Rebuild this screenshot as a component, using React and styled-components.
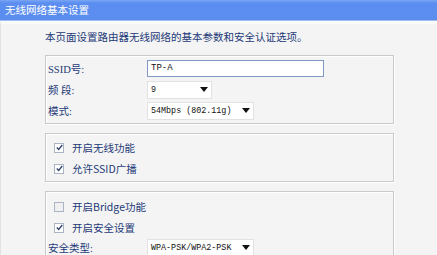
import React from "react";
import styled, { createGlobalStyle } from "styled-components";

const GlobalStyle = createGlobalStyle`
  html, body {
    margin: 0;
    padding: 0;
    background: #f4f4f4;
  }
  body {
    font-family: "Liberation Serif", "Noto Sans CJK SC", serif;
    font-size: 10.5px;
  }
`;

const CheckIcon = () => (
  <svg width="7" height="7" viewBox="0 0 7 7">
    <path d="M0.8 3.4 L2.7 5.4 L6.2 1" fill="none" stroke="#32466e" strokeWidth="1.4" />
  </svg>
);

const Caret = () => (
  <svg width="8" height="5" viewBox="0 0 8 5">
    <path d="M0 0 H8 L4 5 Z" fill="#111" />
  </svg>
);

const App = () => {
  return (
    <>
      <GlobalStyle />
      <Page>
        <Header>无线网络基本设置</Header>
        <Body>
          <Intro>本页面设置路由器无线网络的基本参数和安全认证选项。</Intro>
          <Box $pad="2px 0">
            <Row>
              <Label>SSID号:</Label>
              <TextInput>TP-A</TextInput>
            </Row>
            <Row>
              <Label>频 段:</Label>
              <Select $w={65}>
                <span>9</span>
                <Caret />
              </Select>
            </Row>
            <Row>
              <Label>模式:</Label>
              <Select $w={107}>
                <span>54Mbps (802.11g)</span>
                <Caret />
              </Select>
            </Row>
          </Box>
          <Box $pad="3px 0 2px">
            <CheckRow>
              <Check $on>
                <CheckIcon />
              </Check>
              <span>开启无线功能</span>
            </CheckRow>
            <CheckRow>
              <Check $on>
                <CheckIcon />
              </Check>
              <span>允许SSID广播</span>
            </CheckRow>
          </Box>
          <Box $pad="4px 0 2px">
            <CheckRow>
              <Check />
              <span>开启Bridge功能</span>
            </CheckRow>
            <CheckRow>
              <Check $on>
                <CheckIcon />
              </Check>
              <span>开启安全设置</span>
            </CheckRow>
            <Row $h={19}>
              <Label>安全类型:</Label>
              <Select $w={107}>
                <span>WPA-PSK/WPA2-PSK</span>
                <Caret />
              </Select>
            </Row>
          </Box>
        </Body>
      </Page>
    </>
  );
};

export default App;

const Page = styled.div`
  width: 437px;
  height: 255px;
  overflow: hidden;
  background: #f4f4f4;
`;

const Header = styled.div`
  height: 20px;
  line-height: 20px;
  padding-left: 5px;
  color: #fff;
  font-family: "Noto Sans CJK SC", sans-serif;
  font-size: 10.5px;
  background: linear-gradient(to bottom, #7aa6f4 0, #5b8ef0 3px, #5a8dee 100%);
  border-bottom: 1px solid #9fbdf0;
`;

const Body = styled.div`
  display: flex;
  flex-direction: column;
  padding: 6px 0 0 44px;
  border-left: 1px solid #e2e2e2;
  border-top: 3px solid #fafafa;
  min-height: 230px;
`;

const Intro = styled.div`
  color: #1d3a78;
  font-family: "Noto Sans CJK SC", sans-serif;
  line-height: 14px;
  height: 14px;
  margin-bottom: 11px;
`;

const Box = styled.div`
  width: 347px;
  padding: ${(p) => p.$pad};
  border: 1px solid #c9c9c9;
  box-shadow: inset 1px 1px 0 #fff, 1px 1px 0 #fff;
  margin-bottom: 9px;
  display: flex;
  flex-direction: column;
`;

const Row = styled.div`
  display: flex;
  align-items: center;
  height: ${(p) => p.$h || 21}px;
`;

const Label = styled.div`
  width: 99px;
  padding-left: 2px;
  color: #1d3a78;
`;

const TextInput = styled.div`
  box-sizing: border-box;
  width: 177px;
  height: 17px;
  line-height: 15px;
  padding-left: 3px;
  border: 1px solid #7f98c4;
  background: #fff;
  color: #111;
  font-family: "Liberation Mono", monospace;
  font-size: 9px;
`;

const Select = styled.div`
  box-sizing: border-box;
  width: ${(p) => p.$w}px;
  height: 18px;
  display: flex;
  align-items: center;
  justify-content: space-between;
  gap: 4px;
  padding: 0 3px 0 3px;
  border: 1px solid #e2e2e2;
  background: #fff;
  color: #111;
  font-family: "Liberation Mono", monospace;
  font-size: 8.4px;
  white-space: nowrap;
`;

const CheckRow = styled.div`
  display: flex;
  align-items: center;
  gap: 8px;
  height: 21px;
  padding-left: 8px;
  color: #1d3a78;
  font-family: "Noto Sans CJK SC", sans-serif;
`;

const Check = styled.span`
  box-sizing: border-box;
  width: 10px;
  height: 10px;
  display: flex;
  align-items: center;
  justify-content: center;
  border: 1px solid #a9b4c4;
  background: ${(p) => (p.$on ? "#fff" : "#f0f0f0")};
`;
